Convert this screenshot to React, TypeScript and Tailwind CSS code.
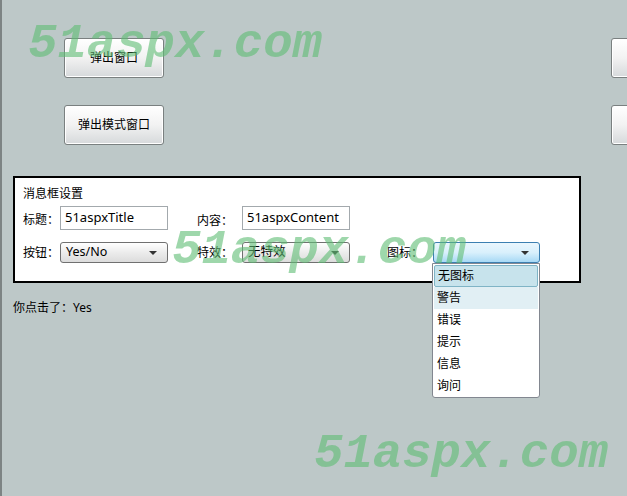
const FONT = { fontFamily: '"Noto Sans", "Noto Sans CJK SC", sans-serif' };

const Btn = ({ label }: { label: string }) => (
  <div className="w-[100px] h-[40px] shrink-0 rounded-[3px] border border-[#7a8080] bg-gradient-to-b from-white via-[#f2f2f2] to-[#d6d9db] flex items-center justify-center text-[12px] text-black shadow-[inset_0_0_0_1px_#ffffff]">
    {label}
  </div>
);

const TextBox = ({ value }: { value: string }) => (
  <div className="w-[108px] h-[24px] border border-[#a3a9ad] bg-white flex items-center px-[4px] text-[13px] text-black">
    {value}
  </div>
);

const Arrow = () => (
  <svg width="8" height="4" viewBox="0 0 8 4" className="ml-auto">
    <path d="M0 0 L8 0 L4 4 Z" fill="#333" />
  </svg>
);

const Combo = ({ value }: { value: string }) => (
  <div className="w-[108px] h-[21px] rounded-[3px] border border-[#707070] bg-gradient-to-b from-white via-[#ececec] to-[#dcdcdc] flex items-center pl-[5px] pr-[10px] text-[12.5px] text-black">
    {value}
    <Arrow />
  </div>
);

// 水印
const Watermark = ({ x, y }: { x: number; y: number }) => (
  <div
    className="absolute text-[49px] font-bold italic text-[#5fbd74] opacity-60 blur-[0.7px] leading-none pointer-events-none whitespace-nowrap"
    style={{ left: x, top: y, fontFamily: '"Liberation Mono", monospace' }}
  >
    51aspx.com
  </div>
);

const items = ["无图标", "警告", "错误", "提示", "信息", "询问"];

export default function App() {
  return (
    <div className="relative w-[627px] h-[496px] overflow-hidden bg-[#bdc8c8] border-l-2 border-[#7d8484]" style={FONT}>
      <div className="flex pt-[38px] pl-[62px]">
        <Btn label="弹出窗口" />
        <div className="ml-[447px]"><Btn label="" /></div>
      </div>
      <div className="flex pt-[27px] pl-[62px]">
        <Btn label="弹出模式窗口" />
        <div className="ml-[447px]"><Btn label="" /></div>
      </div>

      <div className="ml-[11px] mt-[31px] w-[568px] h-[107px] border-2 border-black bg-white pl-[8px] pt-[8px] text-[12px] text-black">
        <div className="h-[16px] leading-[16px]">消息框设置</div>
        <div className="flex items-center mt-[4px] h-[24px]">
          <span className="w-[37px] mt-[4px]">标题：</span>
          <TextBox value="51aspxTitle" />
          <span className="w-[45px] ml-[29px] mt-[6px]">内容：</span>
          <TextBox value="51aspxContent" />
        </div>
        <div className="flex items-center mt-[12px] h-[21px]">
          <span className="w-[37px]">按钮：</span>
          <Combo value="Yes/No" />
          <span className="w-[45px] ml-[29px]">特效：</span>
          <Combo value="无特效" />
          <span className="w-[46px] ml-[37px]">图标：</span>
          <div className="relative">
            <div className="w-[107px] h-[21px] rounded-[3px] border border-[#3c7fb1] bg-gradient-to-b from-[#eaf6fd] via-[#d9f0fc] to-[#a7d9f5] flex items-center pr-[10px]">
              <Arrow />
            </div>
            <div className="absolute left-[-1px] top-[21px] w-[108px] h-[135px] bg-white border border-[#828790] rounded-b-[3px] p-[1px] z-10 text-[12px]">
              {items.map((t, i) => (
                <div
                  key={t}
                  className={
                    "h-[22px] flex items-center pl-[3px] " +
                    (i === 0
                      ? "bg-[#c7e3ec] border border-[#7fb4c6] rounded-[2px]"
                      : i === 1
                      ? "bg-[#e1eff4]"
                      : "")
                  }
                >
                  {t}
                </div>
              ))}
            </div>
          </div>
        </div>
      </div>

      <div className="ml-[11px] mt-[17px] text-[12px] text-black leading-[16px]">你点击了：Yes</div>

      <Watermark x={26} y={20} />
      <Watermark x={170} y={226} />
      <Watermark x={312} y={430} />
    </div>
  );
}
